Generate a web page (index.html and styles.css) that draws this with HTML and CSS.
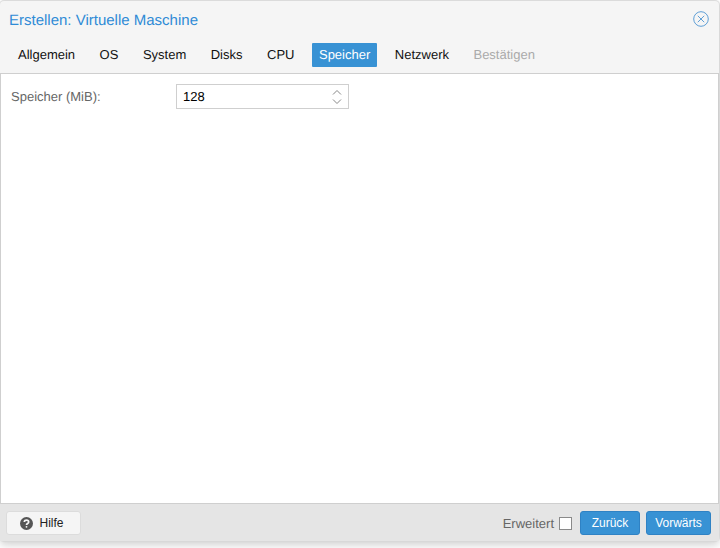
FILE: index.html
```
<!DOCTYPE html>
<html lang="de">
<head>
<meta charset="utf-8">
<title>Erstellen: Virtuelle Maschine</title>
<link rel="stylesheet" href="styles.css">
</head>
<body>
<div class="window">
  <header class="titlebar">
    <h1 class="title">Erstellen: Virtuelle Maschine</h1>
    <svg class="close" width="16" height="16" viewBox="0 0 16 16"><circle cx="8" cy="8" r="7.3"/><path d="M4.8 4.8l6.4 6.4M11.2 4.8l-6.4 6.4"/></svg>
  </header>
  <nav class="tabs">
    <span class="tab">Allgemein</span>
    <span class="tab">OS</span>
    <span class="tab">System</span>
    <span class="tab">Disks</span>
    <span class="tab">CPU</span>
    <span class="tab active">Speicher</span>
    <span class="tab">Netzwerk</span>
    <span class="tab disabled">Bestätigen</span>
  </nav>
  <main class="content">
    <div class="field">
      <label class="field-label">Speicher (MiB):</label>
      <div class="spinner">
        <span class="spinner-value">128</span>
        <svg class="spinner-arrows" width="10" height="18" viewBox="0 0 10 18"><path d="M1 6.5L5 2.5l4 4M1 11.5l4 4 4-4"/></svg>
      </div>
    </div>
  </main>
  <footer class="footer">
    <button class="btn help">
      <svg class="help-icon" width="13" height="13" viewBox="0 0 12 12"><circle cx="6" cy="6" r="6"/><path class="q" d="M4 4.6C4 3.4 4.9 2.8 6 2.8s2 .7 2 1.7c0 1.5-2 1.4-2 2.8"/><circle class="dot" cx="6" cy="9.1" r=".85"/></svg>
      Hilfe
    </button>
    <div class="spacer"></div>
    <span class="adv-label">Erweitert</span>
    <span class="checkbox"></span>
    <button class="btn primary back">Zurück</button>
    <button class="btn primary next">Vorwärts</button>
  </footer>
</div>
</body>
</html>
```
FILE: styles.css
```
* { box-sizing: border-box; }
html, body { margin: 0; height: 100%; background: #fff; overflow: hidden; }
body { font-family: "Liberation Sans", Arial, sans-serif; font-size: 13px; padding-top: 1px; text-rendering: geometricPrecision; }
.window {
  width: 719px;
  height: 540px;
  background: #f5f5f5;
  border-radius: 4px;
  display: flex;
  flex-direction: column;
  box-shadow: 0 0 1px 1px #d8d8d8, 0 4px 8px rgba(0,0,0,.18);
}
.titlebar {
  height: 38px;
  flex: none;
  display: flex;
  align-items: center;
  justify-content: space-between;
  padding: 0 10px 2px 9px;
}
.title { margin: 2px 0 0; font-size: 15px; font-weight: 400; color: #2f8bd6; }
.close { fill: none; stroke: #5f9fd6; stroke-width: 1; }
.tabs {
  height: 34px;
  flex: none;
  display: flex;
  align-items: flex-start;
  gap: 10.5px;
  padding: 4px 0 0 11px;
}
.tab {
  height: 24px;
  line-height: 24px;
  padding: 0 7px;
  color: #111;
  border-radius: 1px;
}
.tab.active { background: #3892d4; color: #fff; }
.tab.disabled { color: #aaa; }
.content {
  flex: 1;
  background: #fff;
  border: 1px solid #cfcfcf;
  padding: 10px;
}
.field { display: flex; align-items: center; height: 25px; }
.field-label { width: 165px; color: #666; }
.spinner {
  width: 173px;
  height: 25px;
  border: 1px solid #cfcfcf;
  display: flex;
  align-items: center;
  justify-content: space-between;
  padding: 0 6px;
  color: #000;
}
.spinner-arrows { fill: none; stroke: #888; stroke-width: 1; }
.footer {
  height: 37px;
  flex: none;
  background: #e5e5e5;
  display: flex;
  align-items: center;
  padding: 1px 8px 0 6px;
}
.spacer { flex: 1; }
.btn {
  height: 24px;
  font: inherit;
  font-size: 12px;
  border-radius: 3px;
  padding: 0;
}
.help {
  width: 75px;
  background: #f5f5f5;
  border: 1px solid #dcdcdc;
  color: #222;
  display: flex;
  align-items: center;
  justify-content: center;
  gap: 6px;
  padding-right: 3px;
}
.help-icon circle { fill: #555; }
.help-icon .q { fill: none; stroke: #f5f5f5; stroke-width: 1.6; }
.help-icon .dot { fill: #f5f5f5; }
.adv-label { color: #666; margin-right: 5px; }
.checkbox { width: 13px; height: 13px; background: #fff; border: 1px solid #8a8a8a; margin-right: 8px; }
.primary { background: #3892d4; border: 1px solid #2f82c4; color: #fff; }
.back { width: 60px; margin-right: 6px; }
.next { width: 65px; }
```
